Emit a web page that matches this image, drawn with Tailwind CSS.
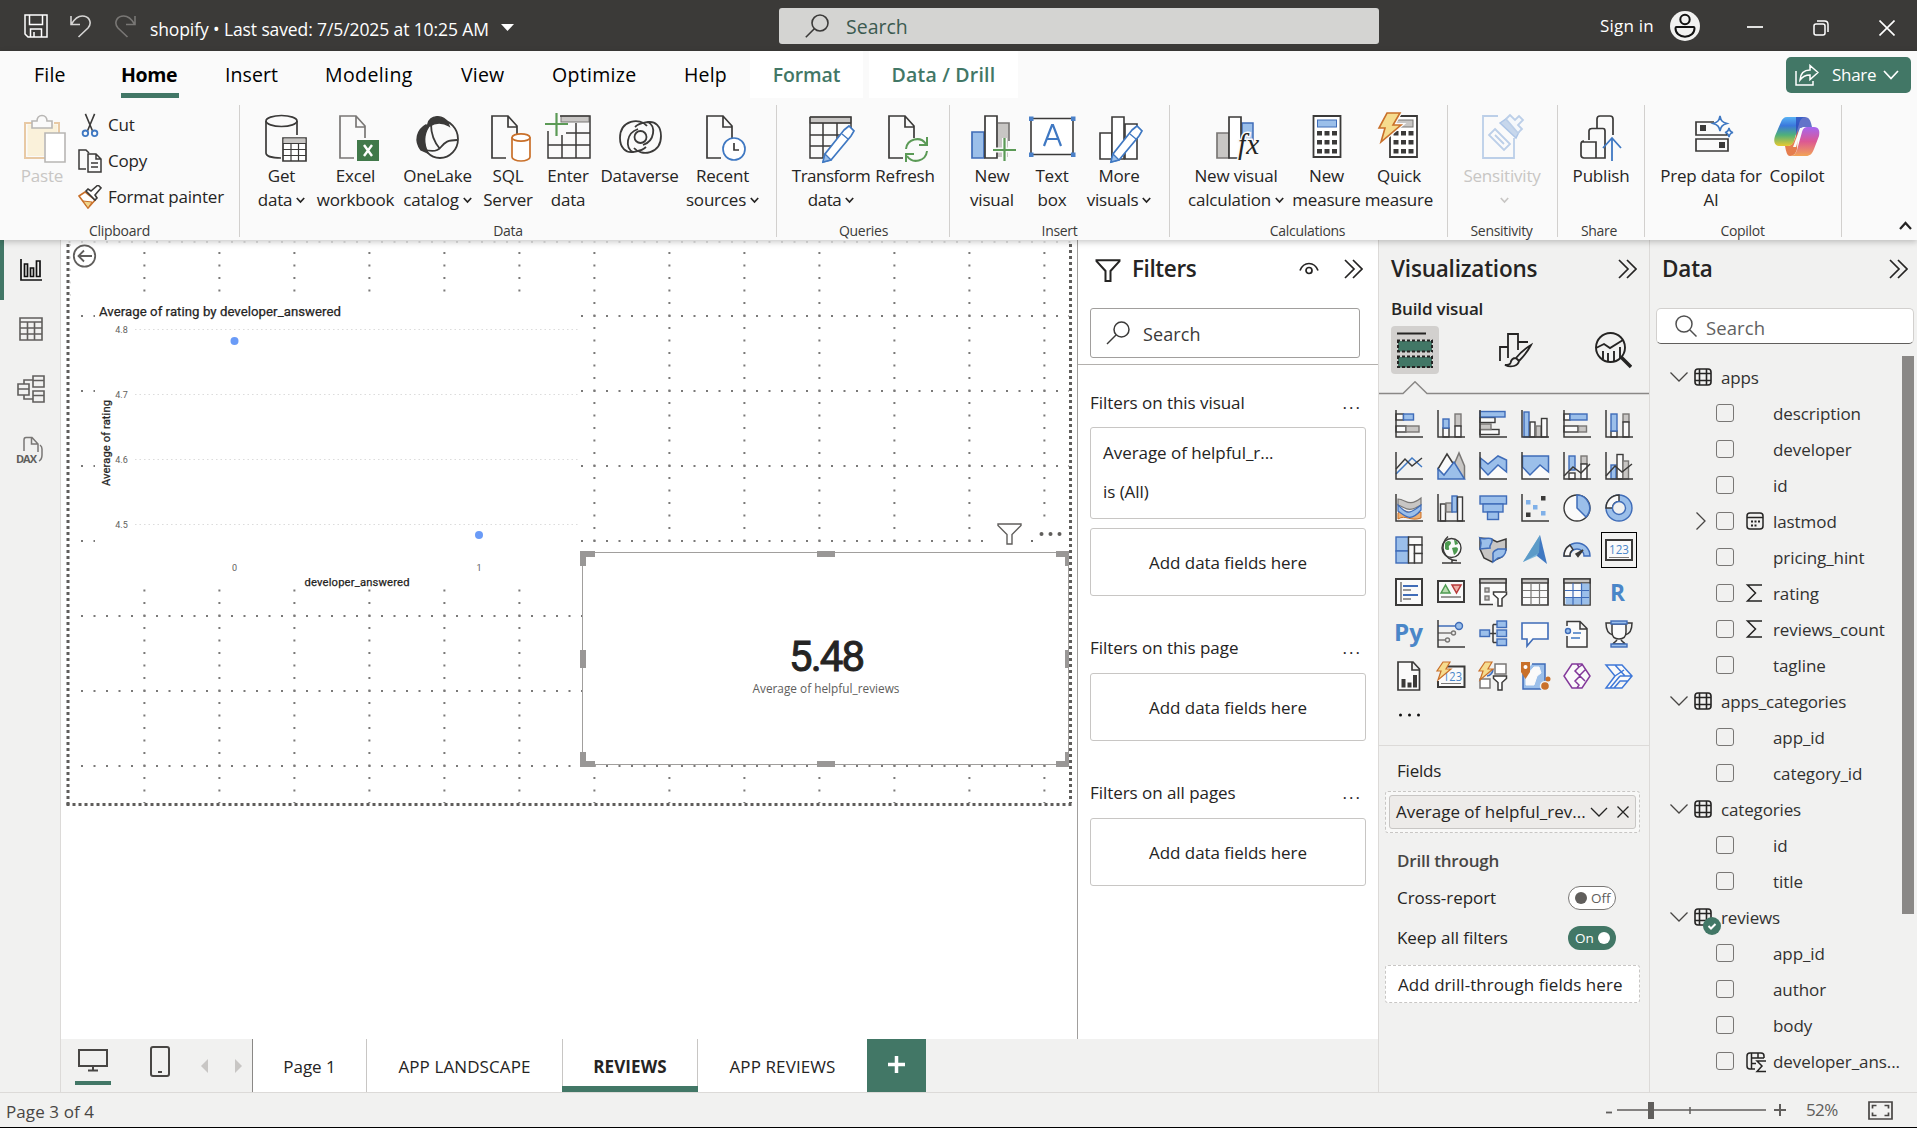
<!DOCTYPE html>
<html lang="en">
<head>
<meta charset="utf-8">
<title>shopify - report editor</title>
<script src="https://cdn.jsdelivr.net/npm/@tailwindcss/browser@4"></script>
</head>
<body class="w-[1917px] h-[1128px] overflow-hidden bg-[#f1f1f0] text-[#252423] font-['Open_Sans','Noto_Sans',sans-serif] text-[17px] flex flex-col whitespace-nowrap">

<!-- Title bar -->
<header class="h-[51px] shrink-0 bg-[#3b3a38] text-white flex items-center">
  <div class="w-[779px] flex items-center pl-[24px] h-full">
    <svg class="w-[24px] h-[24px]" viewBox="0 0 24 24" fill="none" stroke="#fff" stroke-width="1.5"><path d="M1 1h22v22H4l-3-3zM5.500 1v9.500h13V1M6.500 23v-8h11v8M10 18v5"/></svg>
    <svg class="w-[22px] h-[24px] ml-[22px]" viewBox="0 0 22 24" fill="none" stroke="#d6d5d4" stroke-width="1.600"><path d="M1 2v8.500h9M1.500 10C5 4 10 1.200 14.500 2.200C20 3.500 22 9.500 18 14L8.500 23"/></svg>
    <svg class="w-[22px] h-[24px] ml-[22px]" viewBox="0 0 22 24" fill="none" stroke="#797775" stroke-width="1.600"><path d="M21 2v8.500h-9M20.500 10C17 4 12 1.200 7.500 2.200C2 3.500 0 9.500 4 14L13.500 23"/></svg>
    <span class="ml-[14px] mt-[7px] w-[341px] text-[17.5px] tracking-[-0.11px]">shopify • Last saved: 7/5/2025 at 10:25 AM</span>
    <svg class="w-[13px] h-[7px] ml-[10px] mt-[3px]" viewBox="0 0 13 7" fill="#fff"><path d="M0 0h13L6.500 7z"/></svg>
  </div>
  <div class="w-[600px] h-[36px] mt-[1px] bg-[#d4d4d2] rounded-[3px] flex items-center pl-[26px] text-[#3b5a50] text-[19.5px]">
    <svg class="w-[24px] h-[24px]" viewBox="0 0 24 24" fill="none" stroke="#3b3a39" stroke-width="1.600"><circle cx="15" cy="9" r="8"/><path d="M9.300 14.700L.8 23.200"/></svg>
    <span class="ml-[17px] mt-[2px]">Search</span>
  </div>
  <div class="flex items-center ml-[221px]">
    <span class="w-[70px] text-[17px] mt-[1px] tracking-[0.2px]">Sign in</span>
    <svg class="w-[30px] h-[30px]" viewBox="0 0 30 30"><circle cx="15" cy="15" r="15" fill="#f1f1f0"/><g fill="none" stroke="#111" stroke-width="2"><circle cx="15" cy="8.500" r="4.700"/><path d="M6.500 16h17c.8 0 1 .6 1 1.200c0 5-4 8.500-9.500 8.500S5.500 22.200 5.500 17.200c0-.6.200-1.200 1-1.200z"/></g></svg>
    <svg class="w-[16px] h-[16px] ml-[47px]" viewBox="0 0 16 16"><path d="M0 9h16" stroke="#fff" stroke-width="1.700"/></svg>
    <svg class="w-[16px] h-[16px] ml-[50px] mt-[4px]" viewBox="0 0 16 16" fill="none" stroke="#fff" stroke-width="1.500"><rect x="1" y="4" width="11" height="11" rx="2"/><path d="M4 1h7.500c2 0 3.500 1.500 3.500 3.500V12"/></svg>
    <svg class="w-[16px] h-[16px] ml-[50px] mt-[4px]" viewBox="0 0 16 16" stroke="#fff" stroke-width="1.600"><path d="M.5.5l15 15m0-15l-15 15"/></svg>
  </div>
</header>

<!-- Ribbon -->
<section class="h-[189px] shrink-0 bg-[#fafafa] relative z-10 shadow-[0_2px_6px_rgba(0,0,0,0.22)] flex flex-col text-[#252423]">
  <nav class="h-[47px] flex text-[19.5px] tracking-[0.2px] leading-[48px] text-black">
    <span class="w-[88px] pl-[34px]">File</span>
    <span class="w-[104px] pl-[33px] font-bold tracking-[-0.35px] relative">Home<i class="absolute left-[33px] bottom-0 w-[58px] h-[5px] bg-[#427766]"></i></span>
    <span class="w-[99px] pl-[33px] tracking-[0.1px]">Insert</span>
    <span class="w-[136px] pl-[34px] tracking-[0.4px]">Modeling</span>
    <span class="w-[91px] pl-[34px]">View</span>
    <span class="w-[132px] pl-[34px] tracking-[0.3px]">Optimize</span>
    <span class="w-[100px] pl-[34px]">Help</span>
    <span class="w-[113px] bg-white text-center font-semibold text-[#427766] tracking-[-0.1px]">Format</span>
    <span class="w-[149px] ml-[6px] bg-white text-center font-semibold text-[#427766] tracking-[0.2px]">Data / Drill</span>
    <div class="ml-auto mr-[6px] mt-[6px] w-[125px] h-[36px] rounded-[5px] bg-[#427766] text-white flex items-center pl-[9px] text-[17px] tracking-[-0.3px]">
      <svg class="w-[24px] h-[22px]" viewBox="0 0 24 22" fill="none" stroke="#fff" stroke-width="1.500"><path d="M1 7v14h17v-4M5 16C5.500 9 9 6 15 6V1.500L23 8.500L15 15.500V11C10 11 7.500 12.500 5 16z"/></svg>
      <span class="ml-[13px]">Share</span>
      <svg class="w-[16px] h-[10px] ml-[7px]" viewBox="0 0 16 10" fill="none" stroke="#fff" stroke-width="1.700"><path d="M1 1l7 7.500L15 1"/></svg>
    </div>
  </nav>

  <div id="ribbon" class="h-[139px] flex pt-[7px]">
    <div class="w-[240px] border-r border-[#d2d0ce] flex flex-col">
      <div class="h-[108px] flex pt-[2px]">
        <div class="w-[60px] ml-[12px] pt-[6px] flex flex-col items-center text-[#c8c6c4]">
          <svg class="w-[48px] h-[50px] ml-[4px]" viewBox="0 0 48 50" fill="none" stroke-width="1.600"><path d="M6 10h8m20 0h5v13M6 10h-1v35h20" stroke="#e8c9a4" stroke-width="2"/><path d="M7.500 11.500h30V24H24v19H7.500z" fill="#faf1da"/><path d="M12 15V8h5c0-3 2-5.500 5-5.500S27 5 27 8h5v7z" fill="#fafafa" stroke="#b8b6b4"/><path d="M25 20h20v29H25z" fill="#fff" stroke="#b8b6b4"/></svg>
          <span class="leading-[24px] mt-[1px] tracking-[-0.2px]">Paste</span>
        </div>
        <div class="ml-[6px] flex flex-col leading-[36px] tracking-[-0.2px]">
          <div class="flex items-center h-[36px]"><svg class="w-[24px] h-[24px]" viewBox="0 0 24 26" fill="none" stroke-width="1.700"><path d="M7 1l8 19M17 1L9 20" stroke="#3b3a39"/><circle cx="7" cy="22" r="3" stroke="#3f78c2" stroke-width="2"/><circle cx="17" cy="22" r="3" stroke="#3f78c2" stroke-width="2"/></svg><span class="ml-[6px]">Cut</span></div>
          <div class="flex items-center h-[36px]"><svg class="w-[24px] h-[24px]" viewBox="0 0 24 24" fill="#fafafa" stroke="#3b3a39" stroke-width="1.500"><path d="M8 20H1V1h7l3 3"/><path d="M10 5h8l5 5v13H10zM18 5v5h5M13 14h7M13 18h7"/></svg><span class="ml-[6px]">Copy</span></div>
          <div class="flex items-center h-[36px]"><svg class="w-[24px] h-[24px]" viewBox="0 0 24 24" stroke-width="1.600"><path d="M1 11l6-4l10 8l-7 8z" fill="#fff" stroke="#c9702a"/><path d="M5 16l9 1l-4 6z" fill="#f0d58c" stroke="#c9702a" stroke-width="1"/><path d="M8 6l2-2l3 2l7-6l3 3l-6 7l2 3l-2 2z" fill="#fff" stroke="#3b3a39"/></svg><span class="ml-[6px]">Format painter</span></div>
        </div>
      </div>
      <div class="h-[24px] text-center text-[14px] leading-[35px] tracking-[-0.3px] text-[#3b3a39]">Clipboard</div>
    </div>
  </div>
  <svg class="absolute right-[5px] bottom-[10px] w-[13px] h-[9px]" viewBox="0 0 13 9" fill="none" stroke="#252423" stroke-width="2.200"><path d="M1 8l5.500-6L12 8"/></svg>
</section>

<!-- Work area -->
<main class="h-[852px] shrink-0 flex">
  <aside class="w-[61px] border-r border-[#dcdad8] bg-[#f1f1f0] flex flex-col text-[#605e5c]">
    <div class="h-[60px] border-l-4 border-[#427766] flex items-center justify-center"><svg class="w-[22px] h-[22px] mr-[3px]" viewBox="0 0 22 22" fill="none" stroke="#111" stroke-width="1.700"><path d="M1 0v21h21M4.500 5h3v12.500h-3zM10.500 9h3v8.500h-3zM16.500 2h3.500v15.500h-3.500z"/></svg></div>
    <div class="h-[58px] flex items-center justify-center"><svg class="w-[24px] h-[24px] ml-[2px]" viewBox="0 0 24 24" fill="none" stroke="#605e5c" stroke-width="1.600"><path d="M1 1h22v22H1zM1 5h22M1 11h22M1 17h22M8.500 5v18M15.500 5v18"/></svg></div>
    <div class="h-[62px] flex items-center justify-center"><svg class="w-[28px] h-[28px] ml-[2px]" viewBox="0 0 28 28" fill="none" stroke="#605e5c" stroke-width="1.600"><path d="M1 9h11v11H1zM1 14h11M16 1h11v11H16zM16 5.500h11M16 16h11v11H16zM16 20.500h11M7 9V5h9M7 20v4h9"/></svg></div>
    <div class="h-[60px] flex items-center justify-center"><svg class="w-[28px] h-[28px] mr-[1px]" viewBox="0 0 28 28" fill="none" stroke="#797775" stroke-width="1.500"><path d="M8 15V4c0-2 1-2.500 2-2.500h6L22 8v8M15.500 1.500V8H22M24 9c1.500 1 2 2 2 4v6c0 3-1 5-3 6"/><text x="0" y="27" font-family="Open Sans" font-weight="700" font-size="11" fill="#605e5c" stroke="none" textLength="21">DAX</text></svg></div>
  </aside>

  <div class="flex flex-col">
    <div class="h-[799px] flex">
      <!-- Report canvas -->
      <div class="w-[1016px] bg-white relative">
        <svg class="absolute left-0 top-0 w-[1016px] h-[799px]" viewBox="61 240 1016 799" fill="none">
          <g id="grid" stroke="#7a7978" stroke-width="2" stroke-dasharray="2 10.500"></g>
          <path d="M68.500 242H1071" stroke="#d5d5d5" stroke-width="1.500" stroke-dasharray="2 10.500"/>
          <path d="M70.500 244v60" stroke="#ddd" stroke-width="1" stroke-dasharray="2 10.500"/>
          <path d="M68 244V806" stroke="#5f5d5b" stroke-width="3" stroke-dasharray="3"/>
          <path d="M1070.500 244V803" stroke="#5f5d5b" stroke-width="3" stroke-dasharray="3"/>
          <path d="M66.500 804.500H1072" stroke="#5f5d5b" stroke-width="3" stroke-dasharray="3"/>
          <path d="M95 294H581V589H95zM72 245H96V270H72zM984 518H1069V551H1036V536H1030V551H984z" fill="#fff"/>
          <path d="M1031 541h2" stroke="#6b6a69" stroke-width="2"/>
          <g stroke="#605e5c"><circle cx="84.500" cy="256" r="10.700" stroke-width="1.800"/><path d="M92 256H79M84 250.500l-5.500 5.500l5.500 5.500" stroke-width="1.800"/></g>
          <g stroke="#dcdcdc" stroke-width="1.200" stroke-dasharray="1.500 3"><path d="M135 329.500H578M135 394.500H578M135 459.500H578M135 524.500H578"/></g>
          <circle cx="234.500" cy="341" r="4" fill="#6a9bf7"/><circle cx="479" cy="535" r="4" fill="#6a9bf7"/>
          <g font-family="Roboto" fill="#605e5c" font-size="9" text-anchor="middle"><text x="121.500" y="333">4.8</text><text x="121.500" y="398">4.7</text><text x="121.500" y="463">4.6</text><text x="121.500" y="528">4.5</text><text x="234.500" y="570.500">0</text><text x="479" y="570.500">1</text></g>
          <g font-family="Roboto" fill="#252423" stroke="#252423" stroke-width=".25"><text x="99" y="316" font-size="13.200" textLength="242">Average of rating by developer_answered</text><text x="304.500" y="585.500" font-size="11.200" textLength="105">developer_answered</text><text transform="translate(109.500 486) rotate(-90)" font-size="11.200" textLength="86">Average of rating</text></g>
          <rect x="582.500" y="552.500" width="486" height="212" fill="#fff" stroke="#a19f9d"/>
          <path d="M580 551h15v6h-9v9h-6zM817 551h18v6h-18zM1056 551h13v15h-4v-9h-9zM580 650h6v18h-6zM1065 650h4v18h-4zM580 752h6v9h9v6h-15zM817 761h18v6h-18zM1065 752h4v15h-13v-6h9z" fill="#999796"/>
          <path d="M998 524h23v1.500l-9 9V544h-5v-9.500l-9-9z" stroke="#605e5c" stroke-width="1.400"/>
          <g fill="#605e5c"><circle cx="1041.500" cy="534" r="2"/><circle cx="1050.500" cy="534" r="2"/><circle cx="1059.500" cy="534" r="2"/></g>
          <text x="789" y="670.500" font-family="Roboto" font-size="42" fill="#252423" stroke="#252423" stroke-width=".9" textLength="76">5.48</text>
          <text x="752.500" y="693" font-family="Open Sans" font-size="12.500" fill="#605e5c" textLength="147" lengthAdjust="spacingAndGlyphs">Average of helpful_reviews</text>
        </svg>
      </div>

      <!-- Filters pane -->
      <section class="w-[301px] bg-white border-l border-[#a19f9d] flex flex-col">
        <div class="h-[125px] border-b border-[#b3b0ad]">
          <div class="h-[60px] flex items-center pl-[17px]">
            <svg class="w-[26px] h-[23px]" viewBox="0 0 26 23" fill="none" stroke="#252423" stroke-width="2"><path d="M1.500 1.200h23v1L15.500 12v10h-5V12L1.500 2.200z"/></svg>
            <span class="ml-[11px] -mt-[2px] text-[22.5px] leading-[30px] font-semibold tracking-[-0.4px] w-[67px]">Filters</span>
            <svg class="w-[20px] h-[14px] ml-[100px] -mt-[2px]" viewBox="0 0 20 14" fill="none" stroke="#252423" stroke-width="1.700"><path d="M1 8.500C3 3.500 6 1.500 10 1.500s7 2 9 7"/><circle cx="10" cy="8.500" r="3"/></svg>
            <svg class="w-[19px] h-[20px] ml-[25px] -mt-[2px]" viewBox="0 0 19 20" fill="none" stroke="#252423" stroke-width="1.700"><path d="M1 1l9 9l-9 9M9 1l9 9l-9 9"/></svg>
          </div>
          <div class="ml-[12px] mt-[8px] w-[270px] h-[50px] border border-[#a19f9d] rounded-[3px] flex items-center pl-[15px] text-[18px] text-[#3b3a39]">
            <svg class="w-[24px] h-[24px]" viewBox="0 0 24 24" fill="none" stroke="#3b3a39" stroke-width="1.500"><circle cx="15.500" cy="8.500" r="7.500"/><path d="M10 14L1 23"/></svg>
            <span class="ml-[13px] mt-[2px] tracking-[0.1px]">Search</span>
          </div>
        </div>
        <div class="px-[12px] flex flex-col tracking-[-0.05px]">
          <div class="h-[62px] pt-[13px] flex items-center"><span>Filters on this visual</span><span class="ml-auto mr-[4px] tracking-[2px]">...</span></div>
          <div class="w-[276px] h-[92px] border border-[#c8c6c4] rounded-[3px] px-[12px] pt-[5px] leading-[39px]"><div>Average of helpful_r...</div><div>is (All)</div></div>
          <div class="w-[276px] h-[68px] mt-[9px] border border-[#c8c6c4] rounded-[3px] leading-[67px] text-center">Add data fields here</div>
          <div class="h-[77px] pt-[27px] flex items-center"><span>Filters on this page</span><span class="ml-auto mr-[4px] tracking-[2px]">...</span></div>
          <div class="w-[276px] h-[68px] border border-[#c8c6c4] rounded-[3px] leading-[67px] text-center">Add data fields here</div>
          <div class="h-[77px] pt-[27px] flex items-center"><span>Filters on all pages</span><span class="ml-auto mr-[4px] tracking-[2px]">...</span></div>
          <div class="w-[276px] h-[68px] border border-[#c8c6c4] rounded-[3px] leading-[67px] text-center">Add data fields here</div>
        </div>
      </section>
    </div>

    <!-- Page tabs -->
    <div class="h-[53px] flex leading-[55px]">
      <div class="w-[191px] flex items-start relative">
        <div class="w-[36px] ml-[14px] pt-[10px] flex flex-col items-center h-[46px] border-b-4 border-[#427766]"><svg class="w-[30px] h-[23px]" viewBox="0 0 30 23" fill="none" stroke="#484644" stroke-width="2"><path d="M1 1h28v16H1zM15 17v5M10 21.500h10"/></svg></div>
        <svg class="w-[20px] h-[31px] ml-[39px] mt-[7px]" viewBox="0 0 20 31" fill="none" stroke="#484644" stroke-width="2"><rect x="1" y="1" width="18" height="29" rx="2"/><path d="M8 26h4"/></svg>
        <svg class="w-[7px] h-[14px] ml-[31px] mt-[20px]" viewBox="0 0 7 14" fill="#c8c6c4"><path d="M7 0v14L0 7z"/></svg>
        <svg class="w-[7px] h-[14px] ml-[27px] mt-[20px]" viewBox="0 0 7 14" fill="#c8c6c4"><path d="M0 0v14l7-7z"/></svg>
      </div>
      <span class="w-[114px] bg-white border-l border-[#8a8886] text-center">Page 1</span>
      <span class="w-[196px] bg-white border-l border-[#c8c6c4] text-center tracking-[0.1px]">APP LANDSCAPE</span>
      <span class="w-[135px] bg-white border-l border-[#c8c6c4] text-center font-bold tracking-[0.1px] relative">REVIEWS<i class="absolute left-[-1px] right-[-1px] bottom-0 h-[6px] bg-[#427766]"></i></span>
      <span class="w-[170px] bg-white border-l border-[#c8c6c4] text-center tracking-[0.1px]">APP REVIEWS</span>
      <span class="w-[59px] bg-[#427766] flex items-center justify-center"><svg class="w-[17px] h-[17px] -mt-[2px]" viewBox="0 0 17 17" stroke="#fff" stroke-width="3.500"><path d="M8.500 0v17M0 8.500h17"/></svg></span>
    </div>
  </div>

  <!-- Visualizations pane -->
  <section class="w-[271px] border-l border-[#dcdad8] flex flex-col">
    <div class="h-[60px] flex items-center pl-[12px]"><span class="-mt-[2px] text-[22.5px] font-semibold tracking-[-0.2px] w-[150px]">Visualizations</span>
      <svg class="w-[19px] h-[20px] ml-[77px] -mt-[2px]" viewBox="0 0 19 20" fill="none" stroke="#252423" stroke-width="1.700"><path d="M1 1l9 9l-9 9M9 1l9 9l-9 9"/></svg></div>
    <div class="pl-[12px] h-[26px] leading-[18px] text-[17px] font-semibold tracking-[-0.15px]">Build visual</div>
    <div class="flex pl-[12px] h-[55px]">
      <div class="w-[48px] h-[48px] rounded-[4px] bg-[#d2d0ce] flex items-center justify-center"><svg class="w-[36px] h-[36px]" viewBox="0 0 36 36"><path d="M0 1.500h29" stroke="#252423" stroke-width="2"/><path fill="#427766" d="M1 9h34v10.500H1zM1 25h34v10.500H1z"/><path fill="none" stroke="#252423" stroke-width="2" stroke-dasharray="3 2" d="M0 8.500h36M0 19.500h36M0 24.500h36M0 35h36M1 8v12M35 8v12M1 24v12M35 24v12"/></svg></div>
      <svg class="w-[34px] h-[36px] ml-[60px] mt-[6px]" viewBox="0 0 34 36" fill="#f1f1f0" stroke="#252423" stroke-width="1.800"><path d="M1 29V15h8M9 26V2h10v16M19 10h10" fill="none"/><path d="M32 13c-5 3-11 8-15 13l3 3c5-5 9-10 12-16zM17 26c-4 0-5 2-5.500 5c-.5 1.500-3 2-5.500 2c6 3 13 1 14-4z"/></svg>
      <svg class="w-[37px] h-[37px] ml-[62px] mt-[6px]" viewBox="0 0 37 37" fill="none" stroke="#252423" stroke-width="1.900"><circle cx="15.500" cy="15.500" r="14.500"/><path d="M1 16l8-4l6 4L28 8M8 19v8M13 21v9M19 19v10M25 15v11"/><path d="M26 25l10 10" stroke-width="3.500"/></svg>
    </div>
    <svg class="w-[270px] h-[14px] shrink-0" viewBox="0 0 270 14" fill="none" stroke="#8a8886" stroke-width="1.500"><path d="M0 12.500H24L36 .8L48 12.500H270"/></svg>
    <div id="visuals" class="grid grid-cols-[repeat(6,42px)] auto-rows-[42px] pl-[9px] pt-[8px]"></div>
    <div class="h-[49px] border-b border-[#dcdad8] pl-[19px] pt-[15px]"><svg class="w-[24px] h-[6px]" viewBox="0 0 24 6" fill="#111"><circle cx="2.500" cy="3" r="1.500"/><circle cx="11.500" cy="3" r="1.500"/><circle cx="20.500" cy="3" r="1.500"/></svg></div>
    <div class="pl-[18px] h-[45px] leading-[50px] tracking-[-0.2px]">Fields</div>
    <div class="ml-[6px] w-[255px] h-[42px] shrink-0 border border-dashed border-[#c8c6c4] rounded-[3px] bg-[#f8f8f7] p-[3px]">
      <div class="h-[34px] border border-[#c8c6c4] rounded-[3px] bg-[#edebe9] flex items-center pl-[6px]"><span class="w-[194px]">Average of helpful_rev...</span>
        <svg class="w-[18px] h-[10px]" viewBox="0 0 18 10" fill="none" stroke="#252423" stroke-width="1.300"><path d="M1 1l8 8l8-8"/></svg>
        <svg class="w-[12px] h-[12px] ml-[9px]" viewBox="0 0 12 12" stroke="#252423" stroke-width="1.300"><path d="M.5.5l11 11m0-11l-11 11"/></svg></div>
    </div>
    <div class="pl-[18px] h-[45px] leading-[56px] font-semibold text-[#484644] tracking-[-0.2px]">Drill through</div>
    <div class="pl-[18px] h-[40px] flex items-center tracking-[-0.05px]"><span class="w-[171px]">Cross-report</span><span class="w-[48px] h-[24px] rounded-full bg-white border border-[#797775] flex items-center pl-[6px] text-[13.500px] text-[#605e5c]"><i class="w-[12px] h-[12px] rounded-full bg-[#605e5c] mr-[4px]"></i>Off</span></div>
    <div class="pl-[18px] h-[40px] flex items-center tracking-[-0.05px]"><span class="w-[171px]">Keep all filters</span><span class="w-[48px] h-[24px] rounded-full bg-[#427766] flex items-center pl-[7px] text-[13.500px] text-white">On<i class="w-[12px] h-[12px] rounded-full bg-white ml-[4px]"></i></span></div>
    <div class="ml-[6px] mt-[7px] w-[255px] h-[38px] shrink-0 border border-dashed border-[#c8c6c4] rounded-[3px] bg-white pl-[12px] leading-[37px] tracking-[0.05px]">Add drill-through fields here</div>
  </section>

  <!-- Data pane -->
  <section class="w-[268px] border-l border-[#dcdad8] relative">
    <div class="h-[60px] flex items-center pl-[12px]"><span class="-mt-[2px] text-[22.5px] font-semibold tracking-[-0.2px] w-[227px]">Data</span>
      <svg class="w-[19px] h-[20px] -mt-[2px]" viewBox="0 0 19 20" fill="none" stroke="#252423" stroke-width="1.700"><path d="M1 1l9 9l-9 9M9 1l9 9l-9 9"/></svg></div>
    <div class="ml-[6px] mt-[8px] w-[258px] h-[36px] bg-white rounded-[5px] border border-[#d2d0ce] border-b-[#605e5c] flex items-center pl-[18px] text-[18.500px] text-[#616161]">
      <svg class="w-[22px] h-[22px]" viewBox="0 0 22 22" fill="none" stroke="#505050" stroke-width="1.500"><circle cx="9" cy="9" r="8"/><path d="M15 15l6.500 6.500"/></svg><span class="ml-[9px] mt-[3px] tracking-[0.1px]">Search</span></div>
    <div id="tree" class="mt-[15px] text-[#323130]"></div>
    <i class="absolute left-[252px] top-[116px] w-[12px] h-[558px] bg-[#8a8886]"></i>
  </section>
</main>

<!-- Status bar -->
<footer class="h-[36px] shrink-0 border-t border-[#dcdad8] border-b border-b-black flex items-center text-[#484644]">
  <span class="pl-[6px] w-[1601px] mt-[3px] tracking-[0.1px]">Page 3 of 4</span>
  <svg class="w-[192px] h-[20px]" viewBox="0 0 192 20" fill="none" stroke="#605e5c" stroke-width="1.500"><path d="M5 12.500h6" stroke-width="1.800"/><path d="M16 10H165M89 7v7"/><path d="M47 2h6v17h-6z" fill="#605e5c" stroke="none"/><path d="M173 10h12M179 4v12" stroke-width="2"/></svg>
  <span class="ml-[13px] w-[62px] text-[#605e5c] tracking-[-0.6px]">52%</span>
  <svg class="w-[25px] h-[19px]" viewBox="0 0 25 19" fill="none" stroke="#484644" stroke-width="1.700"><path d="M1 1h23v17H1zM4.500 7.500V4.500h4M16.500 4.500h4v3M4.500 11.500v3h4M16.500 14.500h4v-3"/></svg>
</footer>

<script>
const D = '#3b3a39', BF = '#9bbfea', BS = '#3f6cb8', GF = '#c8c6c4', GS = '#797775', W = '#fafafa';
const r = (x, y, w, h, f, s) => `<rect x="${x}" y="${y}" width="${w}" height="${h}" fill="${f}" stroke="${s}"/>`;
const blue = (x, y, w, h) => r(x, y, w, h, BF, BS), grey = (x, y, w, h) => r(x, y, w, h, GF, GS), white = (x, y, w, h) => r(x, y, w, h, W, D);
const p = (d, s = D, f = 'none', w = 1.5) => `<path d="${d}" stroke="${s}" fill="${f}" stroke-width="${w}"/>`;
const c = (x, y, q, f, s) => `<circle cx="${x}" cy="${y}" r="${q}" fill="${f}" stroke="${s}"/>`;
const axis = p('M1 0v27h27');

/* ribbon icons, 48 x 50 */
const doc = (s = D) => p('M22 45H8V3h16l9 10v12M24 3v11h9', s, 'none', 1.7);
const pencil = p('M37 17l5-4 5 5-3 5L24 47l-8 2 2-8z', '#3f78c2', '#fff', 1.7) + p('M18 41l6 6-8 2zM35 21l6 5', '#3f78c2', BF, 1.3);
const calc = (x, top) => p(`M${x} 3h27v41h-27z`, D, '#fff', 1.8) + r(x + 4, 7, 19, 7, top, top === BF ? BS : GS) +
  [18, 27, 36].map(y => [3.5, 11, 18.5].map(k => `<rect x="${x + k}" y="${y}" width="5" height="4.500" fill="${D}"/>`).join('')).join('');
const swirl = p('M31 13C24 4 4 7 4 25c0 10 6 15 13 14c5-1 9-1 13-5M17 39c-8-4-7-19 5-23', D, 'none', 1.8);
const icons = {
  get: p('M8 8v32c0 3 6 5 15 5M39 8v14', D, 'none', 1.7) + '<ellipse cx="23.500" cy="8" rx="15.500" ry="5.500" fill="none" stroke="#3b3a39" stroke-width="1.700"/>' + p('M25 25h23v23H25z', D, '#fff', 1.7) + r(26, 26, 21, 4, GF, GF) + p('M25 30.500h23M25 36.500h23M25 42.500h23M33 30v18M40.500 30v18', D, 'none', 1.2),
  excel: doc(GS) + '<rect x="25" y="27" width="22" height="21" fill="#41794a"/><path d="M32 32l8 11M40 32l-8 11" stroke="#fff" stroke-width="2.400"/>',
  lake: '<g transform="translate(-1 0)">' + p('M13 12C4 17 1 28 8 37l7 3c-4-8-5-18 1-27z', D, D) + p('M15 11c2-9 15-10 20-1l1 3c-6-4-14-4-19 0z', D, D) + '<ellipse cx="27" cy="26" rx="18" ry="19" fill="none" stroke="#3b3a39" stroke-width="1.800"/>' + p('M18 11c0 10 3 18 9 25M10 36c8 3 14 3 18-2s7-7 16-7', D, 'none', 1.8) + '</g>',
  sql: doc() + p('M28 25v19c0 2 4 4 9 4s9-2 9-4V25z', '#c9702a', '#fff', 1.7) + '<ellipse cx="37" cy="24.500" rx="9" ry="3.700" fill="#fff" stroke="#c9702a" stroke-width="1.700"/>',
  enter: r(17, 3, 28, 6, GF, GS) + p('M4 18v27h42V3H16M4 32h42M18 22v23M32 10v35M22 20h24', D, 'none', 1.5) + p('M1 11h23M12.500 0v23', '#5b9a56', 'none', 2.200),
  verse: swirl + `<g transform="rotate(180 24.500 24)">${swirl}</g>` + '<circle cx="24.500" cy="24" r="6" stroke="#3b3a39" stroke-width="1.800"/>',
  recent: doc() + '<circle cx="35" cy="36" r="11" fill="#fff" stroke="#3f78c2" stroke-width="1.700"/>' + p('M35 30v7h5', D, 'none', 1.7),
  transform: r(3, 4, 41, 6, GF, GS) + p('M3 4h41v13M3 4v41h15M3 10h41M3 22h33M3 33h22M16 10v35M30 10v20', D, 'none', 1.5) + pencil,
  refresh: doc() + p('M25 36a11 11 0 0 1 20-5M46 24v8h-8M46 38a11 11 0 0 1-20 5M25 49v-8h8', '#5b9a56', 'none', 2),
  nv: p('M4 19h12v26H4z', BS, BF, 1.7) + p('M30 10h11v18', GS, GF, 1.7) + r(30, 11, 10, 33, GF, 'none') + p('M17 3h12v42H17z', D, '#fff', 1.7) + p('M25 37h23M36.500 25v23', '#fafafa', 'none', 5) + p('M25 37h23M36.500 25v23', '#5b9a56', 'none', 2.200),
  text: p('M3 5.500h42v36H3z', D, '#fff', 1.6) + p('M16 33L24 12h1l8 21M19 26h11', '#3f78c2', 'none', 2.200) + [[1, 3.5], [43, 3.5], [1, 39.500], [43, 39.500]].map(a => `<rect x="${a[0]}" y="${a[1]}" width="4.500" height="4.500" fill="#4a80c8"/>`).join(''),
  more: p('M5 20h12v26H5z', D, '#fff', 1.6) + p('M30 11h12v35H30z', D, '#fff', 1.6) + p('M17 4h12v42H17z', D, '#fff', 1.6) + pencil,
  nvc: p('M5 20h12v25H5z', GS, GF, 1.7) + p('M30 10h11v18h-11z', BS, BF, 1.5) + p('M28 45H17V4h12v24', D, '#fff', 1.7) + '<text x="26" y="41" font-family="Liberation Serif" font-style="italic" font-size="29" fill="#252423" stroke="#fafafa" stroke-width="3" paint-order="stroke" textLength="21">fx</text>',
  calc: calc(10.500, BF),
  quick: calc(15, GF) + p('M12 0h13l-7 12h8L6 29l4-14H4z', '#fafafa', '#fafafa', 4) + p('M12 0h13l-7 12h8L6 29l4-14H4z', '#c9702a', '#f6dc8e', 1.6),
  sens: '<g opacity=".95">' + p('M20 3H5v42h31V25', '#b9cde8', 'none', 1.800) + p('M17 16l15 15-6 6-15-15zM17 22l9 9', '#b9cde8', 'none', 1.800) + p('M22 10l16 15 3-6-13-13z', '#a9c3e6', '#c5d6ec', 1.500) + p('M28 6l4-4 5 5 4-4 4 4-5 5 4 4-4 4z', '#b9cde8', '#f5f8fc', 1.800) + '</g>',
  publish: p('M4 29h15v16H7c-2 0-3-1-3-3V31c0-2 1-3 3-3M12 27V18c0-2 1-2.500 3-2.500h11c1.500 0 2 1 2 2.500V45H19M20 15V6c0-2 1-3 3-3h10c2 0 3 1 3 3v16', D, 'none', 1.700) + p('M35 48V26M26 35l9-10 9 10', '#3f78c2', 'none', 1.800),
  prep: p('M27 9H9v13h31v-4M9 26h32v12H9z', D, 'none', 1.700) + `<rect x="13" y="12" width="6" height="6" fill="${D}"/><rect x="32" y="29" width="6" height="6" fill="${D}"/>` + p('M33 3c1 5 2 6 7 7.500-5 1.500-6 3-7 7.500-1-4.500-2-6-7-7.500 5-1.500 6-2.500 7-7.500zM42 15c.5 3 1.500 4 4 4.500-2.500.5-3.500 1.500-4 4.500-.5-3-1.500-4-4-4.500 2.500-.5 3.500-1.500 4-4.500z', '#3f78c2', '#fff', 1.600),
  copilot: '<defs><linearGradient id="ca" x1="0" y1="0" x2="0" y2="1"><stop offset="0" stop-color="#58b2f4"/><stop offset=".3" stop-color="#3a78dc"/><stop offset=".62" stop-color="#4fb07a"/><stop offset="1" stop-color="#e8ca30"/></linearGradient><linearGradient id="cb" x1="0" y1="0" x2="0" y2="1"><stop offset="0" stop-color="#a566f0"/><stop offset=".5" stop-color="#dc5893"/><stop offset="1" stop-color="#f2a456"/></linearGradient></defs>' +
    '<path d="M14 4h19c-4 0-6 3-7 7l-5 17c-1 4-4 5-7 5H7c-5 0-7-4-5-10l6-14c1-3 3-5 6-5z" fill="url(#ca)"/><path d="M23 4h9c3 0 5 2 6 6l1 4h-7c-4 0-5 2-6 5l-3 10V18z" fill="#2f45b8" opacity=".75"/><path d="M33 43H17c4 0 6-3 7-6l5-18c1-4 3-5 6-5h6c5 0 6 4 5 9l-5 13c-2 5-4 7-8 7z" fill="url(#cb)"/><path d="M14 33c4 0 6-2 7-5l4-11-1 19c-1 4-3 7-7 7-3 0-4-5-5-10z" fill="#e0662f" opacity=".85"/><path d="M27 15l-7 19h3l6-19z" fill="#fafafa"/>'
};
const dn = '<svg class="inline-block w-[9px] h-[7px] ml-[4px] mb-[1px]" viewBox="0 0 9 7" fill="none" stroke="currentColor" stroke-width="1.700"><path d="M.8 1l3.700 4L8.200 1"/></svg>';
const groups = [
  ['Data', 'w-[537px] pl-[7px]', [['get', 'w-[69px]', 'Get', 'data' + dn], ['excel', 'w-[79px]', 'Excel', 'workbook'], ['lake', 'w-[85px]', 'OneLake', 'catalog' + dn], ['sql', 'w-[56px]', 'SQL', 'Server'], ['enter', 'w-[64px]', 'Enter', 'data'], ['verse', 'w-[79px]', 'Dataverse', ''], ['recent', 'w-[87px]', 'Recent', 'sources' + dn]]],
  ['Queries', 'w-[173px] pl-[13px]', [['transform', 'w-[82px]', 'Transform', 'data' + dn], ['refresh', 'w-[66px]', 'Refresh', '']]],
  ['Insert', 'w-[220px] pl-[12px]', [['nv', 'w-[60px]', 'New', 'visual'], ['text', 'w-[60px]', 'Text', 'box'], ['more', 'w-[74px]', 'More', 'visuals' + dn]]],
  ['Calculations', 'w-[278px] pl-[10px]', [['nvc', 'w-[112px]', 'New visual', 'calculation' + dn], ['calc', 'w-[69px]', 'New', 'measure'], ['quick', 'w-[76px]', 'Quick', 'measure']]],
  ['Sensitivity', 'w-[110px] pl-[10px]', [['sens', 'w-[88px]', 'Sensitivity', dn]]],
  ['Share', 'w-[87px] pl-[8px]', [['publish', 'w-[70px]', 'Publish', '']]],
  ['Copilot', 'w-[197px] pl-[11px]', [['prep', 'w-[110px]', 'Prep data for', 'AI'], ['copilot', 'w-[62px]', 'Copilot', '']]]
];
document.getElementById('ribbon').insertAdjacentHTML('beforeend', groups.map(([name, gc, btns]) =>
  `<div class="border-r border-[#d2d0ce] flex flex-col ${gc}"><div class="h-[108px] flex pt-[8px]">` +
  btns.map(([ic, w, a, b]) => `<div class="${w} shrink-0 flex flex-col items-center leading-[24px] ${ic === 'transform' ? 'tracking-[-0.5px]' : 'tracking-[-0.2px]'} ${name === 'Sensitivity' ? 'text-[#c8c6c4]' : ''}"><svg class="w-[48px] h-[50px] mb-[1px] overflow-visible" viewBox="0 0 48 50" fill="none">${icons[ic]}</svg><span>${a}</span><span>${b}</span></div>`).join('') +
  `</div><div class="h-[24px] text-center text-[14px] leading-[35px] tracking-[-0.3px] text-[#3b3a39] ${name === 'Data' ? '-ml-[7px]' : '-ml-[12px]'}">${name}</div></div>`).join(''));

/* canvas guide dots */
let g = '';
for (let x = 144.4; x < 1069; x += 75) g += `<path d="M${x} 252V803"/>`;
for (let y = 316; y < 800; y += 75) g += `<path d="M81 ${y}H1069"/>`;
document.getElementById('grid').innerHTML = g;

/* visual gallery, 28 x 28 */
const bolt = p('M6 0h7L9 7h5L1 18l3-9H0z', '#c9702a', '#f6dc8e', 1.200);
const fun = p('M14.500 14h13v2.500l-4.500 4V28h-4v-7.500l-4.500-4z', D, '#fff', 1.500);
const t = (x, y, s, w, str, f = '#4a86c8', b = 400) => `<text x="${x}" y="${y}" font-family="Open Sans" font-weight="${b}" font-size="${s}" fill="${f}" stroke="none" textLength="${w}" lengthAdjust="spacingAndGlyphs">${str}</text>`;
const visuals = [
  white(1, 4, 7.5, 6) + blue(8.5, 4, 10, 6) + white(1, 16, 10, 6) + grey(11, 16, 13, 6) + axis,
  white(6, 18, 6, 9) + blue(6, 9, 6, 9) + grey(18, 4, 6, 12) + white(18, 16, 6, 11) + axis,
  white(1, 7.5, 15, 5) + blue(1, 1.5, 25, 5.5) + white(1, 19.5, 19, 5) + grey(1, 14, 11, 5.5) + axis,
  blue(3, 2, 5, 25) + white(9, 12, 5, 15) + grey(15, 16, 5, 11) + white(20.5, 8.5, 5.5, 18.5) + axis,
  white(1, 4, 6, 6) + blue(7, 4, 17, 6) + white(1, 16, 14, 6) + grey(15.5, 16, 8, 6) + axis,
  white(6, 21, 6, 6) + blue(6, 4, 6, 17) + grey(18, 4, 6, 8) + white(18, 12, 6, 15) + axis,
  p('M1 22L17 6l10 9', '#3f78c2') + p('M1 17l9-10 7 7L27 6') + axis,
  p('M16 15l6-14 5.500 13v13', GS, GF) + p('M1 17L10 2l9 14L9 26z', D, W) + p('M1 27V17l6 6L17 10l10.500 17z', BS, BF),
  p('M1 14l8 9 10-10 8.500 7V27H1z', W, W) + p('M1.500 6L9 12l10-8 8.500 4v12L19 13 9 23l-7.500-8z', BS, BF) + axis,
  p('M1 14l8 9 10-10 8.500 7V27H1z', W, W) + p('M1.500 4h26v16L19 13 9 23l-7.500-8z', BS, BF) + axis,
  white(6, 21, 6, 6) + blue(6, 4, 6, 14) + grey(18, 4, 6, 8) + white(18, 12, 6, 15) + p('M1 24l9-9 8 6 9-9') + axis,
  blue(6, 13, 5, 14) + white(12, 2.5, 6, 24.5) + grey(18, 9, 5.5, 18) + p('M1 24l9-10 7 6 10-8') + axis,
  p('M3 19c8-7 12 5 23-1v6c-11 4-15-4-23 1z', '#c9702a', '#f0b070', 1) + p('M3 5c8 0 10 9 23-1v7c-13 8-15 3-23 0z', GS, GF, 1.2) + p('M3 11c8 8 10 11 23 0v5c-10 12-15 7-23 1z', BS, BF, 1.2) + axis,
  white(3.500, 10, 5, 17) + grey(9, 9, 6, 9) + blue(15, 2, 5, 16) + white(20.500, 3, 5, 24) + axis,
  blue(1, 2, 26.500, 8) + blue(4, 10, 20, 8) + blue(8.500, 18, 11, 7.500),
  [[20, 2, D], [5, 6, '#7fb0e8'], [12, 11, '#7fb0e8'], [20, 17, '#7fb0e8'], [5, 18.500, D]].map(a => `<rect x="${a[0]}" y="${a[1]}" width="4.500" height="4.500" fill="${a[2]}"/>`).join('') + axis,
  c(14, 14, 13, W, D) + p('M14 14V1a13 13 0 0 1 9 22z', BS, BF),
  c(14, 14, 13, BF, BS) + p('M1 14A13 13 0 0 1 14 1v6.500A6.500 6.500 0 0 0 7.500 14z', D, W) + c(14, 14, 6.500, '#f1f1f0', BS),
  blue(1, 1, 12.5, 14) + blue(1, 15, 12.5, 12) + white(13.5, 1, 13.5, 8) + white(13.5, 9, 6, 18) + white(19.5, 9, 7.5, 8.5) + white(19.5, 17.5, 7.5, 9.5),
  c(14.500, 12, 9.500, W, D) + '<path d="M8 7c3-3 6-2 6 0s-3 2-2 5-3 2-4 1zM15 12c3-1 6-1 6 1s-2 5-4 6zM17 4c2 0 4 2 4 4l-3 1z" fill="#4d9a50"/>' + p('M11 .500A13.500 13.500 0 0 0 20 24.500M15 24v3M5 27h19'),
  p('M1 2l11 1 6 3 9-3v11l-4 7-7 3-3 2-8-4-4-9z', D, GF) + p('M1 2c4 2 8-1 12 1 1 5-3 5-2 9L1 13c1-4 2-6 0-11zM14 19c-1-4 3-5 5-6h8c0 6-4 9-8 9l-5 4z', BS, BF),
  '<path d="M19-1L2 26l14-6z" fill="#7fb9dc"/><path d="M19-1l7 29-10-8z" fill="#3f78c2"/><path d="M19-1L2 26l16-9z" fill="#5c9bc8"/>',
  p('M1 20A13 13 0 0 1 27 20h-6a7 7 0 0 0-14 0z', BS, BF) + p('M1 20A13 13 0 0 1 7 9l3 4.500A7 7 0 0 0 7 20z', D, W) + p('M20 14l-7 4 2 2.500z', D, D),
  p('M1 4h26v20H1z', D, W, 2) + p('M4 21.500h20', GS, 'none', 1) + t(4, 18, 13, 20, '123'),
  p('M1 1h26v26H1z', D, W, 2) + p('M6 4v20', GS) + p('M8 8h15M8 17h15', BS, 'none', 2.200) + p('M8 12h8M8 21h8', GS),
  p('M1 3h26v21H1z', D, W, 2) + p('M4 15l4.500-8 4.500 8z', '#4d9a50', '#b9dcb0') + p('M15 7h9l-4.500 8z', '#b83a3a', '#eeb0a8') + p('M4 19h20', GS),
  p('M14 26.500H1V1h26v12', D, W, 1.700) + r(1, 1, 26, 4, GF, D) + grey(6, 10, 4, 4) + grey(6, 18, 4, 4) + fun,
  p('M1 1h26v26H1z', D, W, 1.700) + r(1, 1, 26, 4, GF, D) + p('M2 12.500h24M2 19.500h24M10 5v22M18.500 5v22', GS, 'none', 1.200),
  p('M1 1h26v26H1z', D, W, 1.700) + r(1, 1, 26, 4, GF, D) + '<path d="M18.500 5.500h8v21h-24v-7h16z" fill="#9bbfea"/>' + p('M2 12.500h24M2 19.500h24M10 5v22M18.500 5v22', BS, 'none', 1.200),
  t(5, 22.500, 24, 15, 'R', '#4a86c8', 700),
  t(-1, 20.500, 24, 29, 'Py', '#4a86c8', 700),
  p('M1 6h18', BS) + c(22, 6, 3.500, BF, BS) + p('M1 13h13M1 20h7', GS) + c(16.500, 13, 2, '#f1f1f0', GS) + c(10.500, 20, 2, '#f1f1f0', GS) + axis,
  p('M10 13.500h7M14 4.500v18M14 4.500h4M14 22.500h4') + blue(1, 10, 9.500, 6.500) + blue(18, 1, 9.500, 6.500) + blue(18, 10, 9.500, 6.500) + blue(18, 19, 9.500, 6.500),
  p('M1 3h26v16H12l-6 7v-7H1z', BS, W, 1.600),
  p('M4 6V1.500h13l7 7V27H4V16M17 1.500V9h7', D, W) + c(5, 11, 2.500, BF, BS) + p('M10 13h8M8 18h9', '#3f78c2'),
  p('M7 3H1c0 7 2 11 7 12M21 3h6c0 7-2 11-7 12') + p('M7 4v8c0 5 3 7 7 7s7-2 7-7V4zM12 19c0 3-3 3-4 5h12c-1-2-4-2-4-5', D, W) + blue(6, 1, 16, 3) + blue(6, 24, 16, 3),
  p('M3 0h15l6.500 7v21H3zM17 0v8h7', D, W, 1.700) + `<path d="M6.500 17h4v8.500h-4zM12.500 20.500h4v5h-4zM18 13h4v12.500h-4z" fill="${D}"/>`,
  p('M10 4.500h17.500V25H1V19', D, W, 2) + p('M4 21.500h20', GS, 'none', 1) + t(6, 19, 13, 19, '123') + bolt,
  p('M16 2h11v10H16z', GS, '#fff') + p('M1 17h10v9H1z', GS, '#fff') + p('M8 14c4 0 6-4 6-7', BS, BF) + bolt + fun,
  p('M2 12v15h22V2H11', BS, BF) + p('M5 14v9h8l3-9 4-3-2-6h-5z', W, W, 1) + '<path d="M0 0h9v10l-4.500 7L0 10z" fill="#c9702a"/><circle cx="4.500" cy="5" r="2" fill="#fff"/><circle cx="24" cy="24" r="4.500" fill="#c9702a" stroke="#f1f1f0"/><circle cx="27" cy="17" r="2.500" fill="#c9702a"/>',
  p('M9 2h5l2 3-4 4 5 5-5 5 4 4-2 3H9L1 14zM14 2h5l8 12-8 12h-5M16 5l3-2M12 9l10 10M16 14l6-6', '#83389a', W),
  p('M1 3h16l10 11-10 12H1l9-12zM10 3l10 11M15 14h12M15 14L5 26M19 8L10 14M23 19h-8L9 26', '#3f78d8', W, 1.500)
];
document.getElementById('visuals').innerHTML = visuals.map((v, i) =>
  `<div class="${i === 23 ? 'm-[3px] border border-black flex items-center justify-center' : 'flex items-center justify-center'}"><svg class="w-[28px] h-[28px] shrink-0 overflow-visible" viewBox="0 0 28 28" fill="none" stroke-width="1.400">${v}</svg></div>`).join('');

/* field list: leading '+' opens a table, suffix picks the field's icon */
const rows = '+apps|description|developer|id|lastmod:cal|pricing_hint|rating:sum|reviews_count:sum|tagline|+apps_categories|app_id|category_id|+categories|id|title|+reviews|app_id|author|body|developer_ans...:calc'.split('|');
const fi = {
  cal: '<rect x="1" y="1" width="16" height="16" rx="3"/><path d="M1 5.500h16"/><path d="M5 9.500h2M8.500 9.500h2M12 9.500h2M5 13.500h2M8.500 13.500h2" stroke-width="1.900"/>',
  sum: '<path d="M16 1H1.500l8 8-8 8H16"/>',
  calc: '<path d="M18 6V4c0-2-1-3-3-3H4C2 1 1 2 1 4v10c0 2 1 3 3 3h5M5.500 1v16M5.500 6H18M12 1v5M5.500 11.500H10"/><path d="M20 9h-9l5 5-5 5.500h9"/>'
};
document.getElementById('tree').innerHTML = rows.map(s => {
  if (s[0] === '+') return `<div class="h-[36px] flex items-center pl-[20px]"><svg class="w-[18px] h-[10px]" viewBox="0 0 18 10" fill="none" stroke="#484644" stroke-width="1.300"><path d="M.5.5L9 9l8.500-8.500"/></svg><span class="relative ml-[6px] w-[27px]"><svg class="w-[18px] h-[18px]" viewBox="0 0 18 18" fill="none" stroke="#252423" stroke-width="1.600"><rect x="1" y="1" width="16" height="16" rx="3"/><path d="M1 5.500h16M1 12.500h16M5.500 1v16M12.500 1v16"/></svg>${s === '+reviews' ? '<svg class="absolute left-[9px] top-[9px] w-[18px] h-[18px]" viewBox="0 0 18 18"><circle cx="9" cy="9" r="9" fill="#427766"/><path d="M5.500 9l2.500 2.500L12.500 7" fill="none" stroke="#fff" stroke-width="2"/></svg>' : ''}</span><span class="mt-[1px] tracking-[-0.15px]">${s.slice(1)}</span></div>`;
  const [n, k] = s.split(':');
  return `<div class="h-[36px] flex items-center pl-[46px]"><svg class="w-[10px] h-[18px]" viewBox="0 0 10 18" fill="none" stroke="#484644" stroke-width="1.300">${k === 'cal' ? '<path d="M.5.5L9 9l-8.500 8.500"/>' : ''}</svg><i class="ml-[10px] w-[18px] h-[18px] border border-[#797775] rounded-[3px]"></i><svg class="ml-[12px] w-[18px] h-[18px] overflow-visible" viewBox="0 0 18 18" fill="none" stroke="#252423" stroke-width="1.500">${fi[k] || ''}</svg><span class="ml-[9px] mt-[1px] tracking-[-0.08px]">${n}</span></div>`;
}).join('');
</script>
</body>
</html>
